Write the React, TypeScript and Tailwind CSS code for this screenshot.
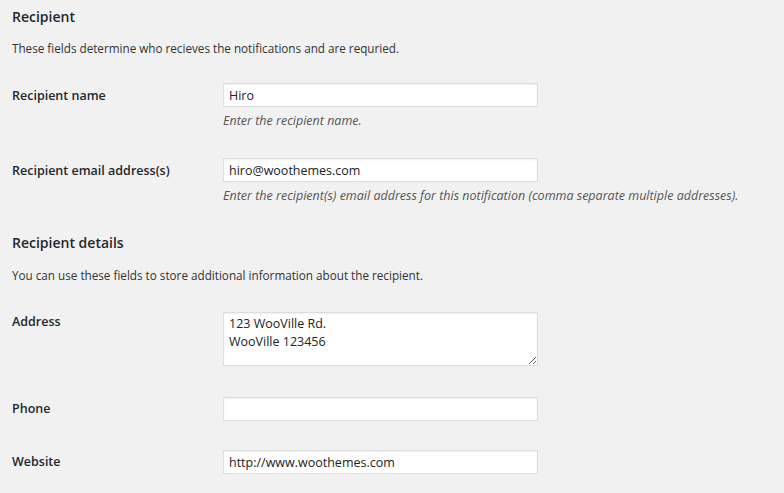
export default function App() {
  return (
    <div className="min-h-screen bg-[#f1f1f1] px-[12px] text-[#23282d] font-['Open_Sans',sans-serif]">
      <h3 className="pt-[7px] text-[14px] font-semibold leading-[20px]">Recipient</h3>
      <p className="mt-[12px] text-[11.7px] leading-[18px] text-[#333]">
        These fields determine who recieves the notifications and are requried.
      </p>

      <div className="mt-[26px] flex">
        <label className="w-[211px] shrink-0 pt-[4px] text-[12.5px] font-semibold leading-[18px]">Recipient name</label>
        <div>
          <input
            defaultValue="Hiro"
            className="block h-[24px] w-[315px] border border-[#ddd] bg-white px-[5px] text-[12.5px] text-[#222] shadow-[inset_0_1px_2px_rgba(0,0,0,0.07)] outline-none"
          />
          <p className="mt-[5px] text-[12.5px] italic leading-[18px] text-[#555]">Enter the recipient name.</p>
        </div>
      </div>

      <div className="mt-[28px] flex">
        <label className="w-[211px] shrink-0 pt-[4px] text-[12.5px] font-semibold leading-[18px]">Recipient email address(s)</label>
        <div>
          <input
            defaultValue="hiro@woothemes.com"
            className="block h-[24px] w-[315px] border border-[#ddd] bg-white px-[5px] text-[12.5px] text-[#222] shadow-[inset_0_1px_2px_rgba(0,0,0,0.07)] outline-none"
          />
          <p className="mt-[5px] text-[12.5px] italic leading-[18px] text-[#555]">
            Enter the recipient(s) email address for this notification (comma separate multiple addresses).
          </p>
        </div>
      </div>

      <h3 className="mt-[28px] text-[14px] font-semibold leading-[20px]">Recipient details</h3>
      <p className="mt-[13px] text-[11.7px] leading-[18px] text-[#333]">
        You can use these fields to store additional information about the recipient.
      </p>

      <div className="mt-[28px] flex">
        <label className="w-[211px] shrink-0 pt-[1px] text-[12.5px] font-semibold leading-[18px]">Address</label>
        <textarea
          defaultValue={"123 WooVille Rd.\nWooVille 123456"}
          className="block h-[54px] w-[315px] resize-y border border-[#ddd] bg-white px-[5px] py-[2px] text-[12.5px] leading-[18px] text-[#222] shadow-[inset_0_1px_2px_rgba(0,0,0,0.07)] outline-none"
        />
      </div>

      <div className="mt-[31px] flex items-center">
        <label className="w-[211px] shrink-0 text-[12.5px] font-semibold leading-[18px]">Phone</label>
        <input className="block h-[24px] w-[315px] border border-[#ddd] bg-white px-[5px] text-[12.5px] text-[#222] shadow-[inset_0_1px_2px_rgba(0,0,0,0.07)] outline-none" />
      </div>

      <div className="mt-[29px] flex items-center">
        <label className="w-[211px] shrink-0 text-[12.5px] font-semibold leading-[18px]">Website</label>
        <input
          defaultValue="http://www.woothemes.com"
          className="block h-[24px] w-[315px] border border-[#ddd] bg-white px-[5px] text-[12.5px] text-[#222] shadow-[inset_0_1px_2px_rgba(0,0,0,0.07)] outline-none"
        />
      </div>
    </div>
  );
}
